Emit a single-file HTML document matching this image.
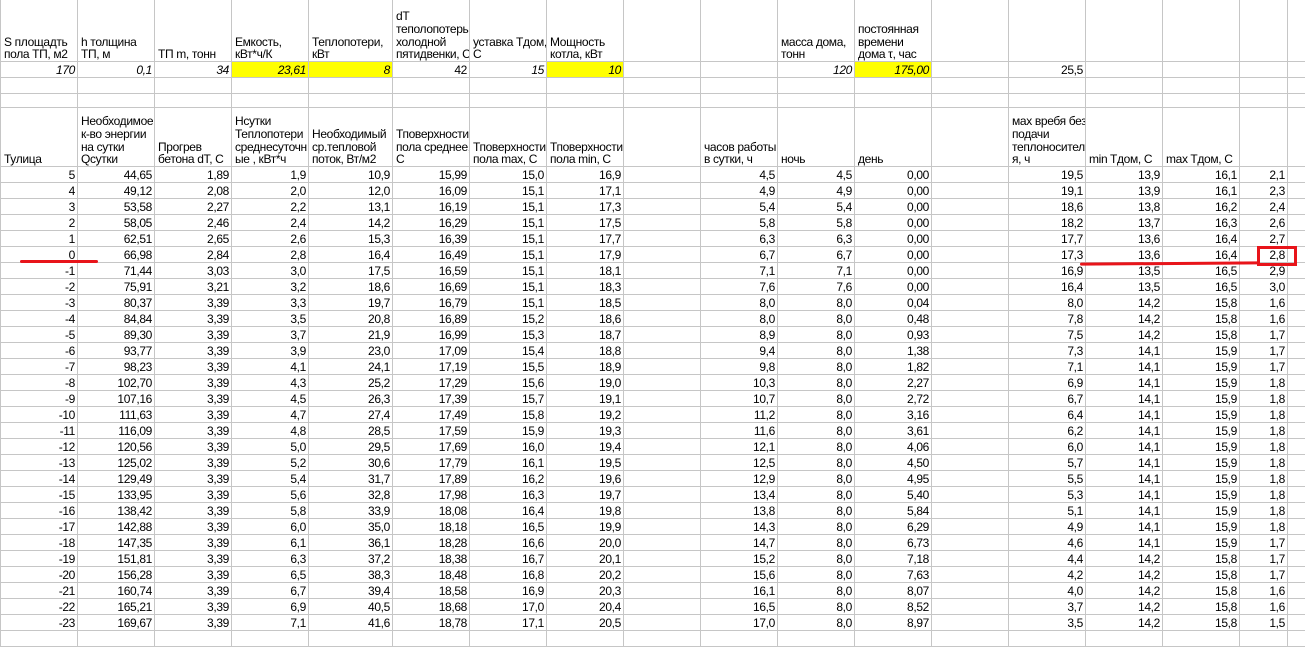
<!DOCTYPE html>
<html><head><meta charset="utf-8"><style>
html,body{margin:0;padding:0;background:#fff;width:1305px;height:639px;overflow:hidden}
table{border-collapse:collapse;table-layout:fixed;width:1307px;font-family:"Liberation Sans",Arial,sans-serif;font-size:12px;letter-spacing:-0.35px;color:#000;position:absolute;left:0;top:-1px}
td{border:1px solid #c6c6c6;padding:0 2px 0 3px;vertical-align:bottom;text-align:right;white-space:nowrap;overflow:hidden;line-height:13px;height:15px;box-sizing:content-box}
td.l{text-align:left;line-height:12.7px}
tr.h1 td{height:61px}
tr.h5 td{height:58px}
tr.e2 td{height:13px}
tr.v td{font-style:italic}
tr.v td.n{font-style:normal}
.y{background:#ffff00}
.r{position:absolute;background:#e8141a;border-radius:2px}
.box{position:absolute;border:3px solid #e8141a;box-sizing:border-box}
</style></head><body>
<table>
<colgroup><col style="width:77px"><col style="width:77px"><col style="width:77px"><col style="width:77px"><col style="width:84px"><col style="width:77px"><col style="width:77px"><col style="width:77px"><col style="width:77px"><col style="width:77px"><col style="width:77px"><col style="width:77px"><col style="width:77px"><col style="width:77px"><col style="width:77px"><col style="width:77px"><col style="width:48px"><col style="width:20px"></colgroup>
<tr class="h1"><td class="l">S площадть<br>пола ТП, м2</td><td class="l">h толщина<br>ТП, м</td><td class="l">ТП m, тонн</td><td class="l">Емкость,<br>кВт*ч/К</td><td class="l">Теплопотери,<br>кВт</td><td class="l">dT<br>теполопотерь<br>холодной<br>пятидвенки, С</td><td class="l">уставка Тдом,<br>С</td><td class="l">Мощность<br>котла, кВт</td><td></td><td></td><td class="l">масса дома,<br>тонн</td><td class="l">постоянная<br>времени<br>дома τ, час</td><td></td><td></td><td></td><td></td><td></td><td></td></tr>
<tr class="v"><td>170</td><td>0,1</td><td>34</td><td class="y">23,61</td><td class="y">8</td><td class="n">42</td><td>15</td><td class="y">10</td><td></td><td></td><td>120</td><td class="y">175,00</td><td></td><td class="n">25,5</td><td></td><td></td><td></td><td></td></tr>
<tr><td></td><td></td><td></td><td></td><td></td><td></td><td></td><td></td><td></td><td></td><td></td><td></td><td></td><td></td><td></td><td></td><td></td><td></td></tr>
<tr class="e2"><td></td><td></td><td></td><td></td><td></td><td></td><td></td><td></td><td></td><td></td><td></td><td></td><td></td><td></td><td></td><td></td><td></td><td></td></tr>
<tr class="h5"><td class="l">Тулица</td><td class="l">Необходимое<br>к-во энергии<br>на сутки<br>Qсутки</td><td class="l">Прогрев<br>бетона dT, C</td><td class="l">Нсутки<br>Теплопотери<br>среднесуточн<br>ые , кВт*ч</td><td class="l">Необходимый<br>ср.тепловой<br>поток, Вт/м2</td><td class="l">Тповерхности<br>пола среднее,<br>С</td><td class="l">Тповерхности<br>пола max, С</td><td class="l">Тповерхности<br>пола min, С</td><td></td><td class="l">часов работы<br>в сутки, ч</td><td class="l">ночь</td><td class="l">день</td><td></td><td class="l">мах вребя без<br>подачи<br>теплоносител<br>я, ч</td><td class="l">min Tдом, C</td><td class="l">max Tдом, C</td><td></td><td></td></tr>
<tr><td>5</td><td>44,65</td><td>1,89</td><td>1,9</td><td>10,9</td><td>15,99</td><td>15,0</td><td>16,9</td><td></td><td>4,5</td><td>4,5</td><td>0,00</td><td></td><td>19,5</td><td>13,9</td><td>16,1</td><td>2,1</td><td></td></tr>
<tr><td>4</td><td>49,12</td><td>2,08</td><td>2,0</td><td>12,0</td><td>16,09</td><td>15,1</td><td>17,1</td><td></td><td>4,9</td><td>4,9</td><td>0,00</td><td></td><td>19,1</td><td>13,9</td><td>16,1</td><td>2,3</td><td></td></tr>
<tr><td>3</td><td>53,58</td><td>2,27</td><td>2,2</td><td>13,1</td><td>16,19</td><td>15,1</td><td>17,3</td><td></td><td>5,4</td><td>5,4</td><td>0,00</td><td></td><td>18,6</td><td>13,8</td><td>16,2</td><td>2,4</td><td></td></tr>
<tr><td>2</td><td>58,05</td><td>2,46</td><td>2,4</td><td>14,2</td><td>16,29</td><td>15,1</td><td>17,5</td><td></td><td>5,8</td><td>5,8</td><td>0,00</td><td></td><td>18,2</td><td>13,7</td><td>16,3</td><td>2,6</td><td></td></tr>
<tr><td>1</td><td>62,51</td><td>2,65</td><td>2,6</td><td>15,3</td><td>16,39</td><td>15,1</td><td>17,7</td><td></td><td>6,3</td><td>6,3</td><td>0,00</td><td></td><td>17,7</td><td>13,6</td><td>16,4</td><td>2,7</td><td></td></tr>
<tr><td>0</td><td>66,98</td><td>2,84</td><td>2,8</td><td>16,4</td><td>16,49</td><td>15,1</td><td>17,9</td><td></td><td>6,7</td><td>6,7</td><td>0,00</td><td></td><td>17,3</td><td>13,6</td><td>16,4</td><td>2,8</td><td></td></tr>
<tr><td>-1</td><td>71,44</td><td>3,03</td><td>3,0</td><td>17,5</td><td>16,59</td><td>15,1</td><td>18,1</td><td></td><td>7,1</td><td>7,1</td><td>0,00</td><td></td><td>16,9</td><td>13,5</td><td>16,5</td><td>2,9</td><td></td></tr>
<tr><td>-2</td><td>75,91</td><td>3,21</td><td>3,2</td><td>18,6</td><td>16,69</td><td>15,1</td><td>18,3</td><td></td><td>7,6</td><td>7,6</td><td>0,00</td><td></td><td>16,4</td><td>13,5</td><td>16,5</td><td>3,0</td><td></td></tr>
<tr><td>-3</td><td>80,37</td><td>3,39</td><td>3,3</td><td>19,7</td><td>16,79</td><td>15,1</td><td>18,5</td><td></td><td>8,0</td><td>8,0</td><td>0,04</td><td></td><td>8,0</td><td>14,2</td><td>15,8</td><td>1,6</td><td></td></tr>
<tr><td>-4</td><td>84,84</td><td>3,39</td><td>3,5</td><td>20,8</td><td>16,89</td><td>15,2</td><td>18,6</td><td></td><td>8,0</td><td>8,0</td><td>0,48</td><td></td><td>7,8</td><td>14,2</td><td>15,8</td><td>1,6</td><td></td></tr>
<tr><td>-5</td><td>89,30</td><td>3,39</td><td>3,7</td><td>21,9</td><td>16,99</td><td>15,3</td><td>18,7</td><td></td><td>8,9</td><td>8,0</td><td>0,93</td><td></td><td>7,5</td><td>14,2</td><td>15,8</td><td>1,7</td><td></td></tr>
<tr><td>-6</td><td>93,77</td><td>3,39</td><td>3,9</td><td>23,0</td><td>17,09</td><td>15,4</td><td>18,8</td><td></td><td>9,4</td><td>8,0</td><td>1,38</td><td></td><td>7,3</td><td>14,1</td><td>15,9</td><td>1,7</td><td></td></tr>
<tr><td>-7</td><td>98,23</td><td>3,39</td><td>4,1</td><td>24,1</td><td>17,19</td><td>15,5</td><td>18,9</td><td></td><td>9,8</td><td>8,0</td><td>1,82</td><td></td><td>7,1</td><td>14,1</td><td>15,9</td><td>1,7</td><td></td></tr>
<tr><td>-8</td><td>102,70</td><td>3,39</td><td>4,3</td><td>25,2</td><td>17,29</td><td>15,6</td><td>19,0</td><td></td><td>10,3</td><td>8,0</td><td>2,27</td><td></td><td>6,9</td><td>14,1</td><td>15,9</td><td>1,8</td><td></td></tr>
<tr><td>-9</td><td>107,16</td><td>3,39</td><td>4,5</td><td>26,3</td><td>17,39</td><td>15,7</td><td>19,1</td><td></td><td>10,7</td><td>8,0</td><td>2,72</td><td></td><td>6,7</td><td>14,1</td><td>15,9</td><td>1,8</td><td></td></tr>
<tr><td>-10</td><td>111,63</td><td>3,39</td><td>4,7</td><td>27,4</td><td>17,49</td><td>15,8</td><td>19,2</td><td></td><td>11,2</td><td>8,0</td><td>3,16</td><td></td><td>6,4</td><td>14,1</td><td>15,9</td><td>1,8</td><td></td></tr>
<tr><td>-11</td><td>116,09</td><td>3,39</td><td>4,8</td><td>28,5</td><td>17,59</td><td>15,9</td><td>19,3</td><td></td><td>11,6</td><td>8,0</td><td>3,61</td><td></td><td>6,2</td><td>14,1</td><td>15,9</td><td>1,8</td><td></td></tr>
<tr><td>-12</td><td>120,56</td><td>3,39</td><td>5,0</td><td>29,5</td><td>17,69</td><td>16,0</td><td>19,4</td><td></td><td>12,1</td><td>8,0</td><td>4,06</td><td></td><td>6,0</td><td>14,1</td><td>15,9</td><td>1,8</td><td></td></tr>
<tr><td>-13</td><td>125,02</td><td>3,39</td><td>5,2</td><td>30,6</td><td>17,79</td><td>16,1</td><td>19,5</td><td></td><td>12,5</td><td>8,0</td><td>4,50</td><td></td><td>5,7</td><td>14,1</td><td>15,9</td><td>1,8</td><td></td></tr>
<tr><td>-14</td><td>129,49</td><td>3,39</td><td>5,4</td><td>31,7</td><td>17,89</td><td>16,2</td><td>19,6</td><td></td><td>12,9</td><td>8,0</td><td>4,95</td><td></td><td>5,5</td><td>14,1</td><td>15,9</td><td>1,8</td><td></td></tr>
<tr><td>-15</td><td>133,95</td><td>3,39</td><td>5,6</td><td>32,8</td><td>17,98</td><td>16,3</td><td>19,7</td><td></td><td>13,4</td><td>8,0</td><td>5,40</td><td></td><td>5,3</td><td>14,1</td><td>15,9</td><td>1,8</td><td></td></tr>
<tr><td>-16</td><td>138,42</td><td>3,39</td><td>5,8</td><td>33,9</td><td>18,08</td><td>16,4</td><td>19,8</td><td></td><td>13,8</td><td>8,0</td><td>5,84</td><td></td><td>5,1</td><td>14,1</td><td>15,9</td><td>1,8</td><td></td></tr>
<tr><td>-17</td><td>142,88</td><td>3,39</td><td>6,0</td><td>35,0</td><td>18,18</td><td>16,5</td><td>19,9</td><td></td><td>14,3</td><td>8,0</td><td>6,29</td><td></td><td>4,9</td><td>14,1</td><td>15,9</td><td>1,8</td><td></td></tr>
<tr><td>-18</td><td>147,35</td><td>3,39</td><td>6,1</td><td>36,1</td><td>18,28</td><td>16,6</td><td>20,0</td><td></td><td>14,7</td><td>8,0</td><td>6,73</td><td></td><td>4,6</td><td>14,1</td><td>15,9</td><td>1,7</td><td></td></tr>
<tr><td>-19</td><td>151,81</td><td>3,39</td><td>6,3</td><td>37,2</td><td>18,38</td><td>16,7</td><td>20,1</td><td></td><td>15,2</td><td>8,0</td><td>7,18</td><td></td><td>4,4</td><td>14,2</td><td>15,8</td><td>1,7</td><td></td></tr>
<tr><td>-20</td><td>156,28</td><td>3,39</td><td>6,5</td><td>38,3</td><td>18,48</td><td>16,8</td><td>20,2</td><td></td><td>15,6</td><td>8,0</td><td>7,63</td><td></td><td>4,2</td><td>14,2</td><td>15,8</td><td>1,7</td><td></td></tr>
<tr><td>-21</td><td>160,74</td><td>3,39</td><td>6,7</td><td>39,4</td><td>18,58</td><td>16,9</td><td>20,3</td><td></td><td>16,1</td><td>8,0</td><td>8,07</td><td></td><td>4,0</td><td>14,2</td><td>15,8</td><td>1,6</td><td></td></tr>
<tr><td>-22</td><td>165,21</td><td>3,39</td><td>6,9</td><td>40,5</td><td>18,68</td><td>17,0</td><td>20,4</td><td></td><td>16,5</td><td>8,0</td><td>8,52</td><td></td><td>3,7</td><td>14,2</td><td>15,8</td><td>1,6</td><td></td></tr>
<tr><td>-23</td><td>169,67</td><td>3,39</td><td>7,1</td><td>41,6</td><td>18,78</td><td>17,1</td><td>20,5</td><td></td><td>17,0</td><td>8,0</td><td>8,97</td><td></td><td>3,5</td><td>14,2</td><td>15,8</td><td>1,5</td><td></td></tr>
<tr><td></td><td></td><td></td><td></td><td></td><td></td><td></td><td></td><td></td><td></td><td></td><td></td><td></td><td></td><td></td><td></td><td></td><td></td></tr>
</table>
<div class="r" style="left:20px;top:260px;width:78px;height:3px"></div>
<div class="r" style="left:1080px;top:262px;width:180px;height:3px;transform:rotate(-0.4deg)"></div>
<div class="box" style="left:1257px;top:246px;width:40px;height:20px"></div>
</body></html>
